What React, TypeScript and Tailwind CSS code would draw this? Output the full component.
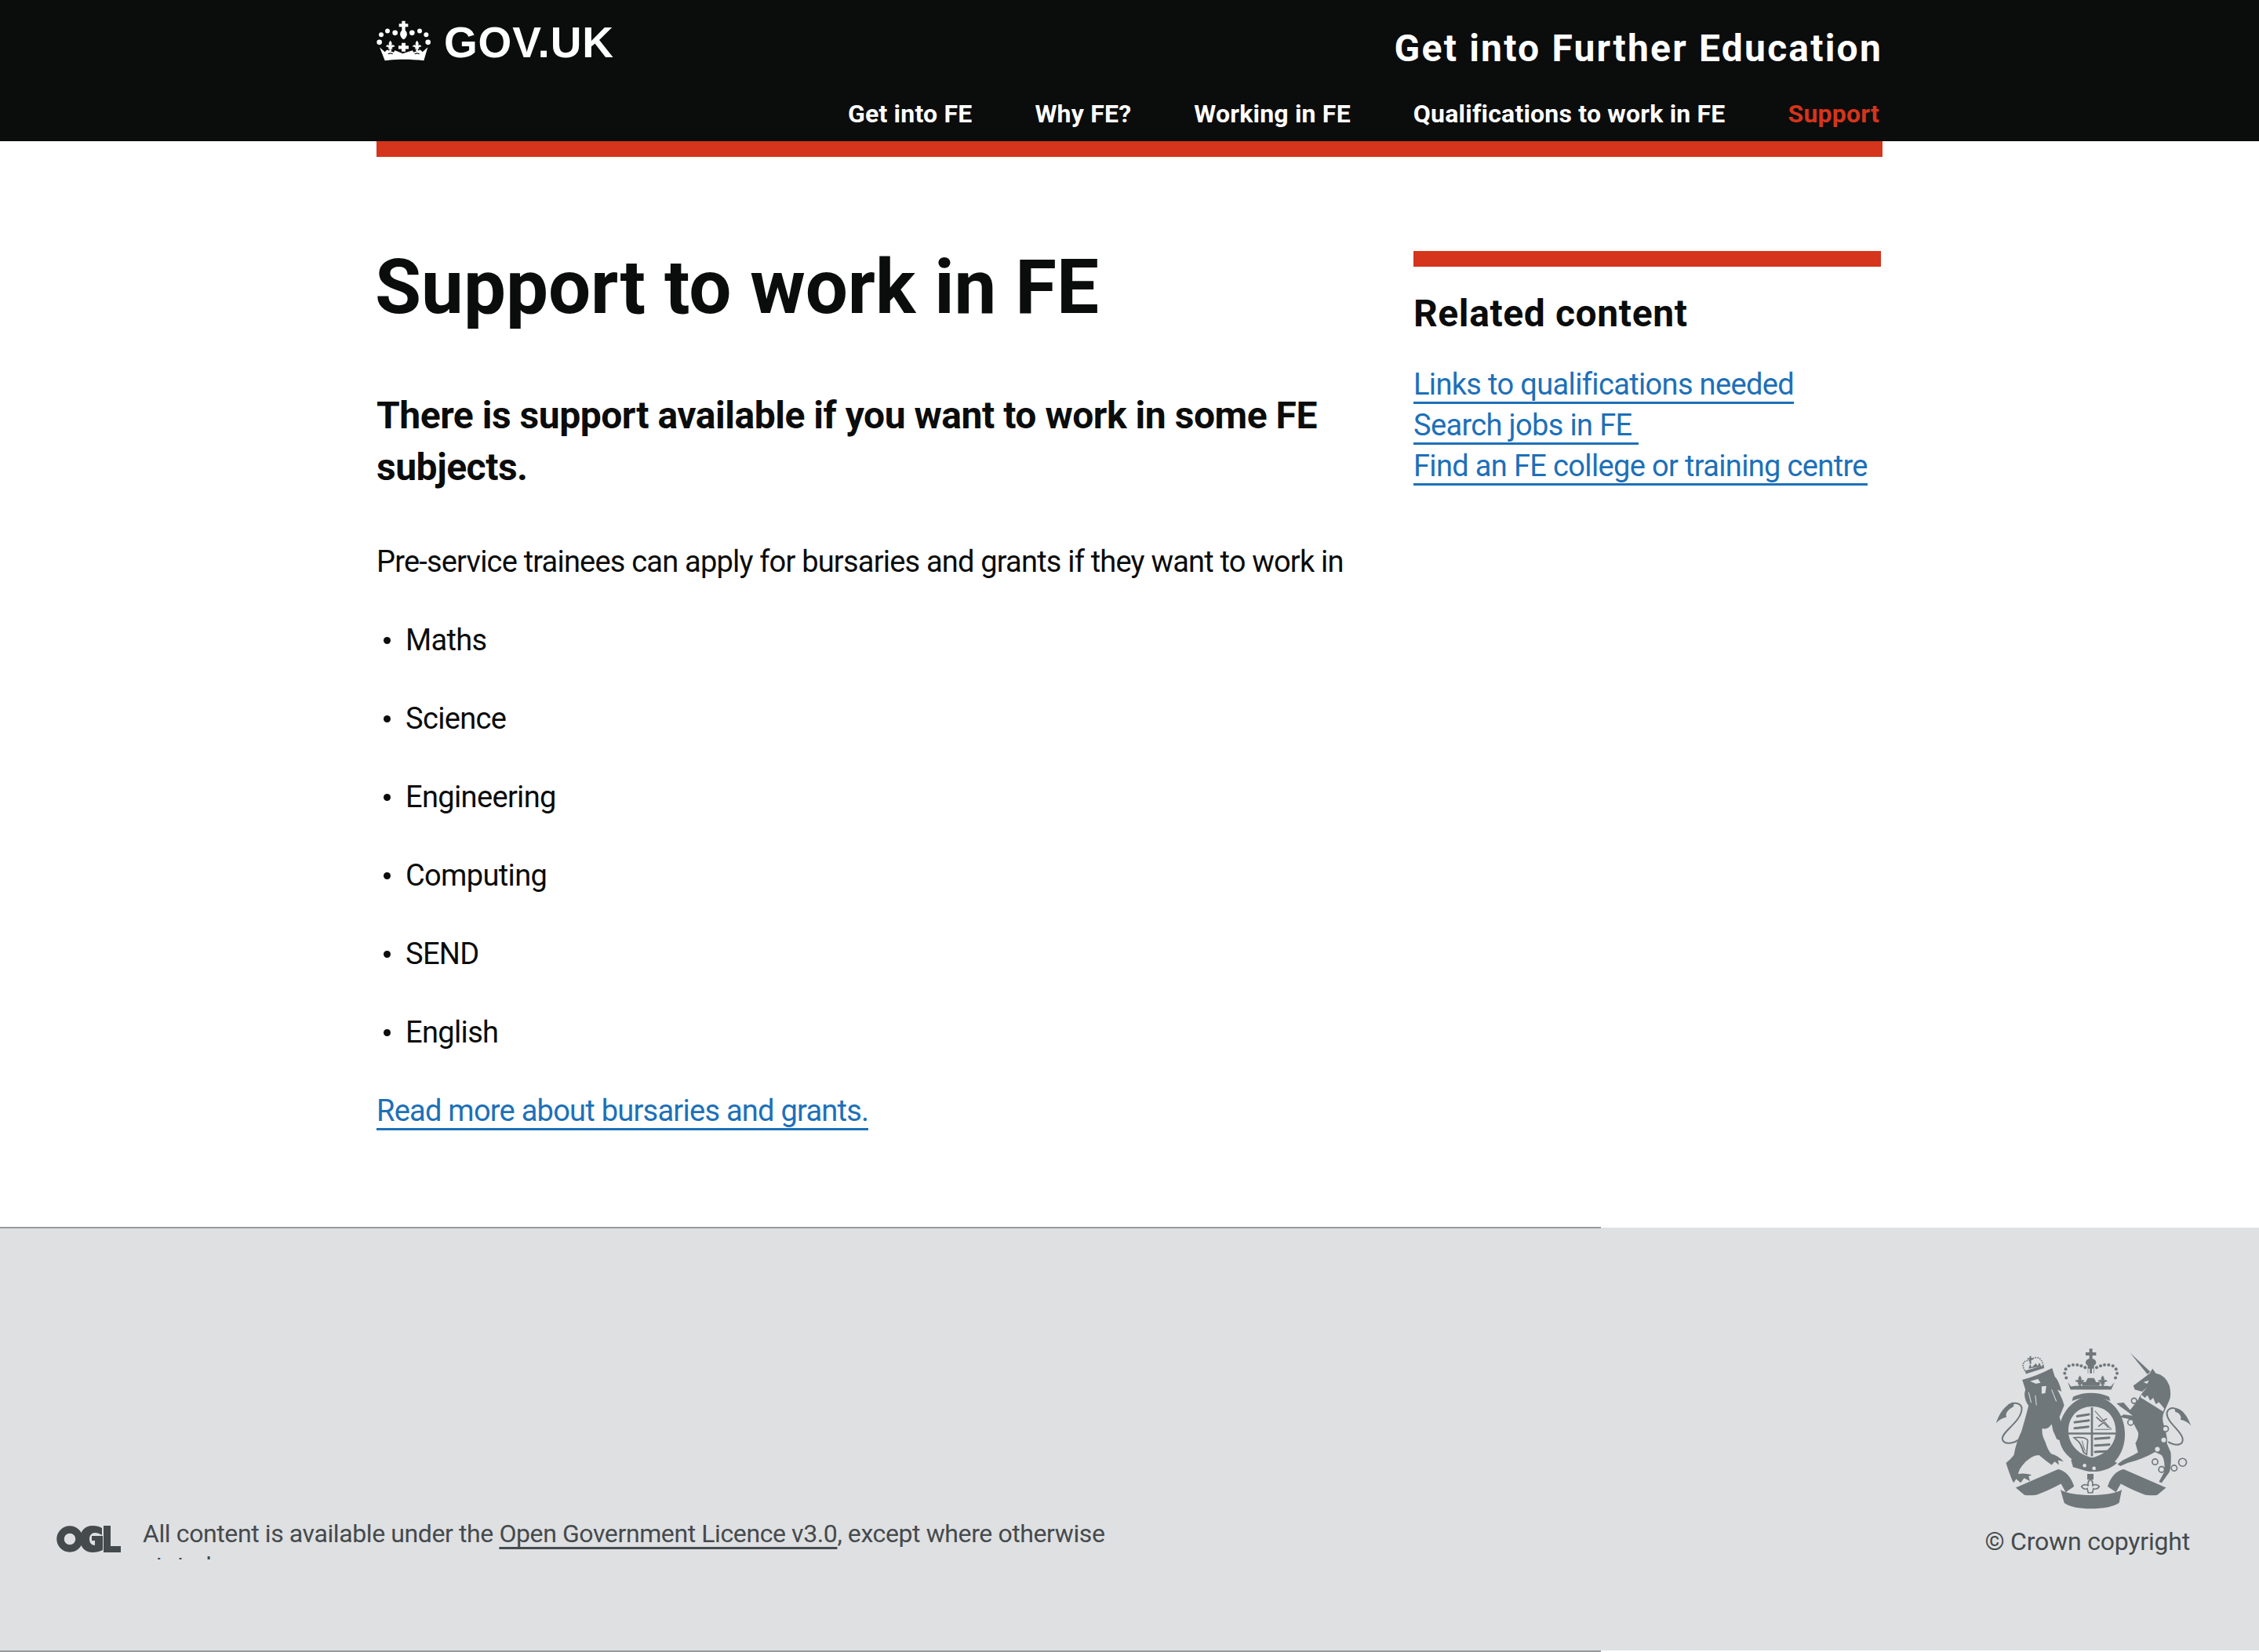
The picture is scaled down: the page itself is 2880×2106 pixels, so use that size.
import React from "react";

const navLinks = [
  { label: "Get into FE", active: false },
  { label: "Why FE?", active: false },
  { label: "Working in FE", active: false },
  { label: "Qualifications to work in FE", active: false },
  { label: "Support", active: true },
];

const subjects = ["Maths", "Science", "Engineering", "Computing", "SEND", "English"];

const related = [
  "Links to qualifications needed",
  "Search jobs in FE\u00a0",
  "Find an FE college or training centre",
];

const Fleur = ({ x, y, s = 1, fill = "currentColor" }: { x: number; y: number; s?: number; fill?: string }) => (
  <path
    transform={`translate(${x} ${y}) scale(${s})`}
    fill={fill}
    d="M0-22C7-14 8-8 4-3C9-7 16-6 18 2C13 1 9 3 6 7L10 12L3 11L5 20L-5 20L-3 11L-10 12L-6 7C-9 3-13 1-18 2C-16-6-9-7-4-3C-8-8-7-14 0-22Z"
  />
);

// crown from the GOV.UK logo, traced from the header
const CrownLogo = () => (
  <svg viewBox="60 80 210 155" className="w-[70px] h-[52px] text-white" fill="currentColor">
    {[
      [71, 163, 10],
      [78, 134, 9],
      [102, 120, 9],
      [131, 127, 10],
      [196, 127, 10],
      [225, 120, 9],
      [250, 134, 9],
      [257, 163, 10],
    ].map(([cx, cy, r]) => (
      <circle key={`${cx}-${cy}`} cx={cx} cy={cy} r={r} />
    ))}
    <path d="M157 82h13v10h11v12h-11v14c5 5 8 11 6 19c-3 9-9 14-12 15c-4-1-10-6-13-15c-2-8 1-14 6-19v-14h-11V92h11z" />
    <Fleur x={113} y={178} s={0.95} />
    <Fleur x={215} y={178} s={0.95} />
    <path d="M156 166h15v10h12v13h-12v10h-15v-10h-12v-13h12z" />
    <path d="M72 182L92 200L100 192L126 202L130 194L160 206L198 194L202 202L228 192L236 200L256 182L241 233C190 227 138 227 92 233Z" />
    <path
      fill="#0b0c0c"
      d="M103 206l10-3 10 3-2 3-8-2-8 2zM205 206l10-3 10 3-2 3-8-2-8 2z"
    />
  </svg>
);

// royal arms, hand traced at 3x from the footer
const Crest = () => (
  <svg viewBox="130 80 760 620" className="w-[254px] h-[207px] -mr-[4px] text-[#6f777b]" fill="currentColor">
    {/* lion */}
    <path d="M238 203Q290 190 352 158L362 190Q378 205 388 248L372 240Q392 275 398 300L380 345L392 385Q402 410 412 432Q395 440 370 430L356 398L350 372Q335 395 315 388Q310 410 326 440Q335 470 348 485Q375 492 396 515L375 510L378 528L362 515L350 528Q320 505 302 490Q270 490 238 530Q225 545 222 562Q250 558 274 566L262 572L268 590L245 578L232 596L215 582L205 596Q195 580 176 520Q195 505 206 490Q215 440 235 400Q250 350 262 302Q240 270 250 240Z" />
    <path d="M232 425C205 450 165 452 162 428C160 400 232 365 236 315C237 292 210 285 185 300" fill="none" stroke="currentColor" strokeWidth="6" />
    <path d="M205 288C175 295 150 330 138 368C150 355 165 348 178 345C172 335 180 318 205 305Z" />
    <path d="M268 208L298 200L308 214L290 218ZM312 228L330 226L326 254L312 256Z" fill="#dee0e2" />
    <path d="M262 250L272 290M288 262L292 300M350 240L368 285" fill="none" stroke="#dee0e2" strokeWidth="3" />
    {/* lion crown */}
    <g fill="none" stroke="currentColor" strokeWidth="5" strokeDasharray="5 4">
      <path d="M248 168C230 140 250 125 268 130C285 112 312 110 318 150" />
    </g>
    <path d="M248 168L320 148L322 158L252 180Z" />
    <path d="M266 112h6v8h8v6h-8v16h-6v-16h-8v-6h8z" />
    <path d="M262 160L268 142L274 156L290 140L296 150L304 138L310 152Z" />
    {/* unicorn */}
    <path d="M662 225Q690 205 725 178L735 160L748 178Q785 185 800 225Q808 260 800 280L780 325Q768 350 780 380Q795 430 790 445L805 480Q808 530 800 555L770 597L760 592L780 555Q785 510 770 490L745 478Q700 505 640 520L612 532L602 525L622 510Q660 492 680 480L670 445Q685 420 680 402L655 355L610 345L625 335L660 340L640 325L612 305L598 293L625 290L650 318L680 280Q690 255 715 232L695 248L668 240Z" />
    <path d="M650 100L727 172L716 182Z" />
    <path d="M795 440C830 460 855 450 850 425C842 395 790 365 790 330C795 310 815 305 830 318" fill="none" stroke="currentColor" strokeWidth="6" />
    <path d="M820 310C850 312 870 345 882 378C868 362 855 358 842 355C848 345 840 330 822 325Z" />
    <path d="M692 258L706 272L716 262L726 282L738 272L748 296L760 288L780 312L776 324L690 270Z" fill="#dee0e2" />
    <path d="M700 212L722 205L715 218Z" fill="#dee0e2" />
    <g fill="#dee0e2" stroke="currentColor" strokeWidth="5">
      <circle cx="665" cy="283" r="10" />
      <circle cx="652" cy="365" r="11" />
      <circle cx="785" cy="390" r="11" />
      <circle cx="745" cy="516" r="11" />
      <circle cx="770" cy="545" r="11" />
      <circle cx="818" cy="540" r="11" />
      <circle cx="850" cy="518" r="15" />
    </g>
    <circle cx="778" cy="433" r="9" fill="#dee0e2" />
    <circle cx="754" cy="468" r="9" fill="#dee0e2" />
    {/* great crown */}
    <path d="M494 84h12v14h14v12h-14v12c8 2 14 8 14 14c0 6-4 10-8 12v30h-24v-30c-4-2-8-6-8-12c0-6 6-12 14-14v-12h-14V98h14z" />
    <path d="M490 160h6v28h-6zM504 160h6v28h-6z" fill="#dee0e2" />
    {[
      [406, 195], [400, 178], [404, 162], [416, 150], [432, 146], [448, 146], [463, 150], [478, 156],
      [522, 156], [537, 150], [552, 146], [568, 146], [584, 150], [596, 162], [600, 178], [594, 195],
    ].map(([cx, cy]) => (
      <circle key={`${cx}-${cy}`} cx={cx} cy={cy} r="6" />
    ))}
    <Fleur x={458} y={208} />
    <Fleur x={545} y={208} />
    <path d="M488 196h24l8 16 16 0-4 14h-64l-4-14h16z" />
    <path d="M412 212L424 228L440 226L560 226L576 228L590 212L578 240H422Z" />
    <path d="M432 268C470 248 530 248 570 268L574 284C530 266 470 266 428 284Z" />
    {/* garter */}
    <path
      fillRule="evenodd"
      d="M505 266C575 266 630 330 630 410C630 480 590 535 535 548C490 555 440 520 410 490C385 465 378 435 378 410C378 330 435 266 505 266ZM505 305C455 305 414 340 414 400C414 445 450 490 505 500C560 490 595 445 595 400C595 340 555 305 505 305Z"
    />
    {/* shield */}
    <path d="M414 404H596V412H414ZM500 308H508V495H500Z" />
    <g stroke="currentColor" strokeWidth="5" strokeLinecap="round" fill="none">
      <path d="M448 342L492 335M438 365L492 358M438 388L490 382" strokeWidth="9" strokeDasharray="7 3" />
      <path d="M522 346L540 362L560 352M530 380L548 366L566 384" />
      <path d="M516 322L578 392M516 392H572" strokeWidth="3" />
      <path d="M516 428L570 424M516 454L570 450M516 478L560 476" strokeWidth="9" strokeDasharray="7 3" />
      <path d="M436 424C460 420 485 425 488 435L484 488L472 480C470 455 455 438 436 424Z" strokeWidth="5" />
      <path d="M456 440L470 478M466 436L478 476" strokeWidth="3" />
    </g>
    {/* garter buckle */}
    <path d="M424 508L462 490L528 524L580 508L600 520C570 548 520 560 480 550L432 536Z" />
    <circle cx="476" cy="530" r="7" fill="#dee0e2" />
    <circle cx="512" cy="541" r="7" fill="#dee0e2" />
    {/* ribbon */}
    <path d="M213 615L375 544C405 550 425 575 436 610L404 632L386 600Q330 630 292 642Q260 645 246 642Z" />
    <path d="M787 615L625 544C595 550 575 575 564 610L596 632L614 600Q670 630 708 642Q740 645 754 642Z" />
    <path d="M384 622C420 650 580 650 618 622L608 672C570 702 430 702 398 672Z" />
    {/* fleur on the ribbon */}
    <path d="M486 562H510V584H486Z" />
    <path d="M498 582C508 592 510 600 505 608C512 602 524 600 532 610C526 620 516 622 510 618L506 634H490L486 618C480 622 470 620 464 610C472 600 484 602 491 608C486 600 488 592 498 582Z" fill="#dee0e2" stroke="currentColor" strokeWidth="5" />
  </svg>
);

// open government licence mark
const OglLogo = () => (
  <svg viewBox="0 0 82 34" className="w-[82px] h-[34px] text-[#454a4c]" fill="currentColor">
    <circle cx="17" cy="17" r="12" fill="none" stroke="currentColor" strokeWidth="9.5" />
    <path fillRule="evenodd" d="M46 0C51 0 55 1 58 3L58 12C55 10 52 9 49 9C45 9 42 12 42 17C42 22 45 25 49 25L49 19L45 19L45 13L59 13L59 31C55 33 51 34 46 34C36 34 30 27 30 17C30 7 36 0 46 0Z" />
    <path d="M60 0H69V26H82V34H60Z" />
  </svg>
);

const App = () => {
  return (
    <div className="min-h-[2106px] bg-white font-['Roboto',sans-serif] text-[38px] leading-[50px] tracking-[-0.65px] text-[#0b0c0c]">
      {/* Header */}
      <header className="h-[180px] bg-[#0b0c0c]">
        <div className="mx-auto w-[1920px] h-full flex flex-col">
          <div className="flex justify-between h-[120px]">
            <div className="flex items-start pt-[26px] gap-[16px]">
              <CrownLogo />
              <span className="font-['Liberation_Sans',sans-serif] font-bold text-[55px] leading-[56px] tracking-[0.8px] text-white">
                GOV.UK
              </span>
            </div>
            <div className="pt-[34px] text-[48px] leading-[56px] font-bold tracking-[2.2px] text-white">
              Get into Further Education
            </div>
          </div>
          <nav className="flex justify-end gap-[80px] pr-[4px] pt-[5px]">
            {navLinks.map((link) => (
              <a
                key={link.label}
                href="#"
                className={`text-[32px] leading-[40px] font-bold tracking-[0.2px] ${link.active ? "text-[#d4351c]" : "text-white"}`}
              >
                {link.label}
              </a>
            ))}
          </nav>
        </div>
      </header>

      {/* Main */}
      <div className="mx-auto w-[1920px]">
        <div className="h-[20px] bg-[#d4351c]" />
        <main className="flex pb-[124px]">
          <div className="w-[1322px] pr-[60px] pt-[116px]">
            <h1 className="-ml-[2px] text-[96px] leading-[100px] font-bold tracking-normal">Support to work in FE</h1>
            <p className="mt-[81px] text-[48px] leading-[66px] font-bold tracking-[-0.47px]">
              There is support available if you want to work in some FE subjects.
            </p>
            <p className="mt-[62px] tracking-[-0.8px]">
              Pre-service trainees can apply for bursaries and grants if they want to work in
            </p>
            <ul className="mt-[50px] flex flex-col gap-[50px]">
              {subjects.map((subject) => (
                <li key={subject} className="flex items-center">
                  <span className="ml-[9px] mr-[19px] w-[9px] h-[9px] rounded-full bg-[#0b0c0c]" />
                  {subject}
                </li>
              ))}
            </ul>
            <a
              href="#"
              className="block mt-[53px] w-fit border-b-[3px] border-[#1d70b8] leading-[44px] tracking-[-0.75px] text-[#1d70b8]"
            >
              Read more about bursaries and grants.
            </a>
          </div>
          <aside className="w-[596px] pt-[120px]">
            <div className="h-[20px] bg-[#d4351c]" />
            <h2 className="mt-[32px] text-[48px] leading-[56px] font-bold tracking-[0.6px]">Related content</h2>
            <div className="mt-[40px] flex flex-col gap-[5px]">
              {related.map((item) => (
                <a
                  key={item}
                  href="#"
                  className="w-fit whitespace-nowrap border-b-[3px] border-[#1d70b8] leading-[44px] text-[#1d70b8]"
                >
                  {item}
                </a>
              ))}
            </div>
          </aside>
        </main>
      </div>

      {/* Footer */}
      <footer className="flex h-[539px] bg-[#dee0e2] text-[#454a4c] text-[32px] tracking-[-0.4px]">
        <div className="w-[2041px] -mt-[1px] -mb-[2px] h-[542px] border-t-2 border-b-2 border-[#999999] pl-[72px] pt-[369px]">
          <div className="flex gap-[28px]">
            <div className="pt-[10px]">
              <OglLogo />
            </div>
            <p className="w-[1260px] h-[53px] overflow-hidden leading-[41px]">
              All content is available under the{" "}
              <a href="#" className="underline underline-offset-[6px] decoration-[3px]">
                Open Government Licence v3.0
              </a>
              , except where otherwise stated
            </p>
          </div>
        </div>
        <div className="flex-1 flex flex-col items-end pr-[88px] pt-[153px]">
          <Crest />
          <div className="mt-[20px] leading-[40px] whitespace-nowrap tracking-[-0.2px]">© Crown copyright</div>
        </div>
      </footer>
    </div>
  );
};

export default App;
